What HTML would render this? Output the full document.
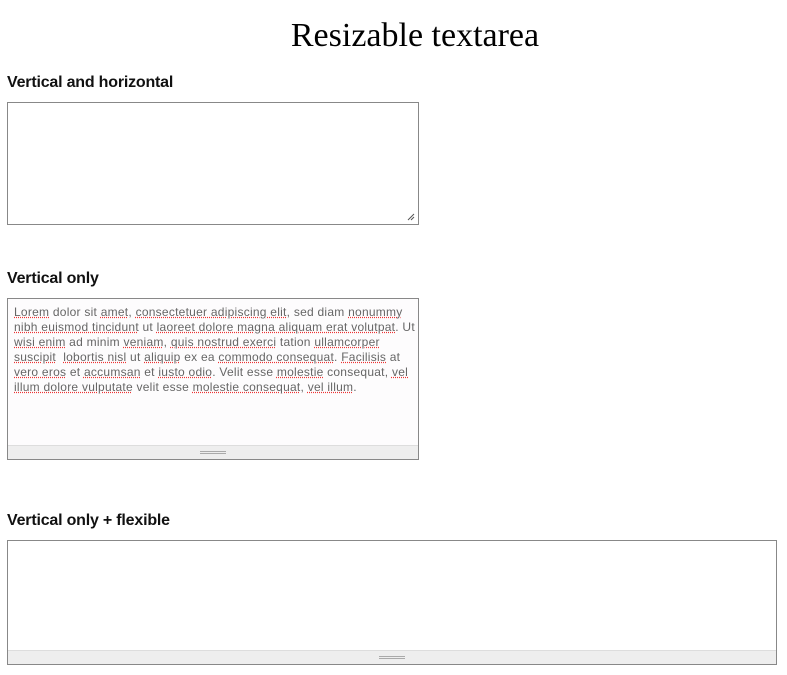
<!DOCTYPE html>
<html><head><style>
body{margin:0;width:787px;height:675px;background:#fff;position:relative;overflow:hidden;font-family:"Liberation Sans",Arial,sans-serif}
h1{position:absolute;left:0;width:830px;top:17px;margin:0;text-align:center;font-family:"Liberation Serif",serif;font-weight:normal;font-size:34px;color:#000}
.lbl{position:absolute;left:7px;font-size:16px;font-weight:bold;color:#111;letter-spacing:-0.2px}
.box{position:absolute;border:1px solid #888;background:#fff;box-sizing:border-box}
.grip{position:absolute;left:0;right:0;bottom:0;height:13px;background:#eee;border-top:1px solid #ddd}
.grip:after{content:"";position:absolute;left:50%;margin-left:-13px;top:5px;width:26px;height:1px;border-top:1px solid #aaa;border-bottom:1px solid #aaa}
.txt{position:absolute;left:6px;top:6px;right:0;font-size:12px;line-height:15px;color:#666;white-space:nowrap;letter-spacing:0.25px}
.txt span{text-decoration:underline dotted #e33}
</style></head><body>
<h1>Resizable textarea</h1>
<div class="lbl" style="top:74px">Vertical and horizontal</div>
<div class="box" style="left:7px;top:102px;width:412px;height:123px">
<svg style="position:absolute;right:3px;bottom:3px" width="8" height="8"><path d="M1 7L7 1M4 7L7 4" stroke="#555" stroke-width="1"/></svg>
</div>
<div class="lbl" style="top:270px">Vertical only</div>
<div class="box" style="left:7px;top:298px;width:412px;height:162px;background:#fdfcfd">
<div class="txt"><span>Lorem</span> dolor sit <span>amet</span>, <span>consectetuer adipiscing elit</span>, sed diam <span>nonummy</span><br><span>nibh euismod tincidunt</span> ut <span>laoreet dolore magna aliquam erat volutpat</span>. Ut<br><span>wisi enim</span> ad minim <span>veniam</span>, <span>quis nostrud exerci</span> tation <span>ullamcorper</span><br><span>suscipit</span>&nbsp; <span>lobortis nisl</span> ut <span>aliquip</span> ex ea <span>commodo consequat</span>. <span>Facilisis</span> at<br><span>vero eros</span> et <span>accumsan</span> et <span>iusto odio</span>. Velit esse <span>molestie</span> consequat, <span>vel</span><br><span>illum dolore vulputate</span> velit esse <span>molestie consequat</span>, <span>vel illum</span>.</div>
<div class="grip"></div>
</div>
<div class="lbl" style="top:512px">Vertical only + flexible</div>
<div class="box" style="left:7px;top:540px;width:770px;height:125px">
<div class="grip"></div>
</div>
</body></html>
